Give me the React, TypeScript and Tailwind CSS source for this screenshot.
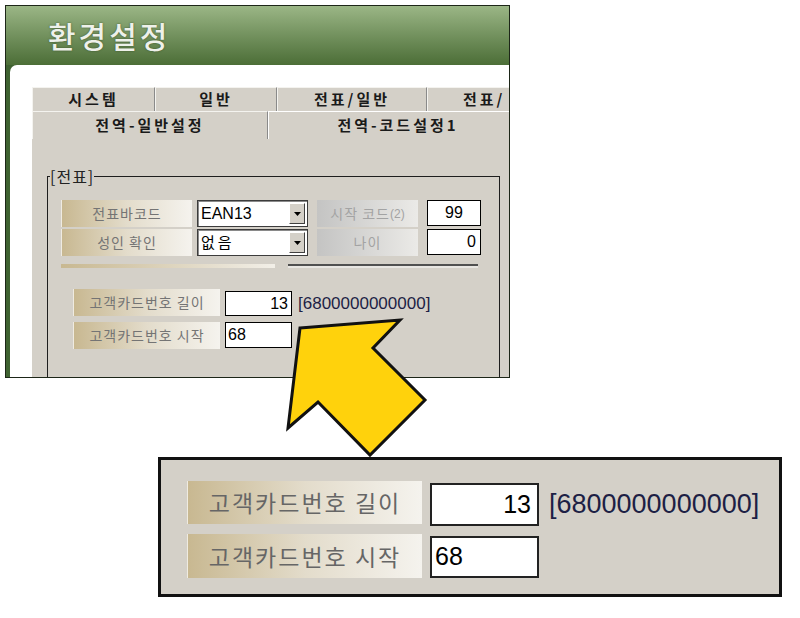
import React from 'react';

const KR = { fontFamily: '"Noto Sans CJK KR", "Noto Sans", sans-serif' };
const NUM = { fontFamily: '"Liberation Sans", Arial, sans-serif' };

const TanLabel = ({ text, className = '' }: { text: string; className?: string }) => (
  <div
    className={`flex items-center justify-center bg-linear-to-r from-[#c8b891] via-[#e3dccb] to-[#f5f3ee] border-l border-[#efebe1] text-[#747474] ${className}`}
    style={KR}
  >
    {text}
  </div>
);

const SilverLabel = ({ children }: { children: React.ReactNode }) => (
  <div
    className="ml-[9px] w-[101px] h-[27px] flex items-center justify-center bg-linear-to-r from-[#c4c4c3] to-[#ebeae7] text-[#a3a3a3] text-[14px] tracking-[1px]"
    style={KR}
  >
    {children}
  </div>
);

const Combo = ({ value, latin }: { value: string; latin?: boolean }) => (
  <div className="ml-[5px] w-[111px] h-[27px] flex bg-white border border-[#3c3c3c] shadow-[inset_1px_1px_0_#8a8a8a]">
    <div
      className={`flex-1 flex items-center pl-[3px] text-black ${latin ? 'text-[16px]' : 'text-[15px] tracking-[3px]'}`}
      style={latin ? NUM : KR}
    >
      {value}
    </div>
    <div className="w-[16px] my-[2px] mr-[2px] flex items-center justify-center bg-[#d4d0c8] border-t border-l border-white border-r border-b border-r-[#404040] border-b-[#404040]">
      <svg width="7" height="4" viewBox="0 0 7 4">
        <polygon points="0,0 7,0 3.5,4" fill="#000" />
      </svg>
    </div>
  </div>
);

const Tab = ({ text, w, extra = '' }: { text: string; w: string; extra?: string }) => (
  <div
    className={`${w} shrink-0 flex items-center bg-[#d4d0c8] border-t border-l border-[#f4f3ef] border-r border-r-[#8a8a8a] text-[15px] font-bold tracking-[3px] text-[#1a1a1a] ${extra || 'justify-center'}`}
    style={KR}
  >
    {text}
  </div>
);

export default function App() {
  return (
    <div className="relative w-[800px] h-[618px] bg-white overflow-hidden">
      {/* top screenshot */}
      <div className="ml-[5px] mt-[5px] w-[505px] h-[373px] border border-[#1d2618] bg-[#3f6231] flex flex-col overflow-hidden">
        <div className="h-[59px] shrink-0 bg-linear-to-b from-[#9bb686] to-[#4c6e37] pl-[42px] flex items-center">
          <span
            className="text-[30px] font-medium tracking-[3px] text-[#eef1ea] [text-shadow:0_0_2px_#3a5229]"
            style={KR}
          >
            환경설정
          </span>
        </div>
        <div className="flex-1 ml-[4px] rounded-tl-[7px] bg-white pt-[22px] pl-[22px] flex flex-col min-h-0">
          <div className="flex h-[24px] shrink-0">
            <Tab text="시스템" w="w-[123px]" />
            <Tab text="일반" w="w-[122px]" />
            <Tab text="전표/일반" w="w-[150px]" />
            <Tab text="전표/" w="w-[82px]" extra="justify-start pl-[35px] border-r-0" />
          </div>
          <div className="flex h-[28px] shrink-0">
            <Tab text="전역-일반설정" w="w-[236px]" />
            <Tab text="전역-코드설정1" w="w-[260px]" extra="justify-center border-t-white border-l-white" />
          </div>
          <div className="flex-1 bg-[#d4d0c8] pl-[15px] pt-[37px]">
            <div className="relative w-[453px] h-[260px] border border-[#1e1e1e] pl-[13px] pt-[23px]">
              <span
                className="absolute left-[2px] top-[-11px] bg-[#d4d0c8] text-[16px] leading-[20px] tracking-[1px] text-[#222]"
                style={KR}
              >
                [전표]
              </span>
              <div className="flex">
                <TanLabel text="전표바코드" className="w-[131px] h-[27px] text-[14px] tracking-[1px]" />
                <Combo value="EAN13" latin />
                <SilverLabel>
                  시작 코드<span className="text-[12px] tracking-normal" style={NUM}>(2)</span>
                </SilverLabel>
                <div className="ml-[9px] w-[54px] h-[26px] bg-white border border-black flex items-center justify-center text-[16px]" style={NUM}>
                  99
                </div>
              </div>
              <div className="flex mt-[2px]">
                <TanLabel text="성인 확인" className="w-[131px] h-[27px] text-[14px] tracking-[1px]" />
                <Combo value="없음" />
                <SilverLabel>나이</SilverLabel>
                <div className="ml-[9px] w-[54px] h-[26px] bg-white border border-black flex items-center justify-end pr-[4px] text-[16px]" style={NUM}>
                  0
                </div>
              </div>
              <div className="flex mt-[8px]">
                <div className="w-[214px] h-[4px] bg-linear-to-r from-[#c8b891] to-[#f2efe8]" />
                <div className="ml-[13px] w-[190px] h-[4px] border-t-2 border-[#505050] bg-[#e8e6e2]" />
              </div>
              <div className="flex mt-[21px] ml-[12px]">
                <TanLabel text="고객카드번호 길이" className="w-[147px] h-[27px] text-[14px] tracking-[1px]" />
                <div className="ml-[5px] mt-[2px] w-[67px] h-[25px] bg-white border border-black flex items-center justify-end pr-[3px] text-[16px]" style={NUM}>
                  13
                </div>
                <div className="ml-[6px] mt-[2px] h-[25px] flex items-center text-[17px] text-[#1d1f45]" style={NUM}>
                  [6800000000000]
                </div>
              </div>
              <div className="flex mt-[6px] ml-[12px]">
                <TanLabel text="고객카드번호 시작" className="w-[147px] h-[27px] text-[14px] tracking-[1px]" />
                <div className="ml-[5px] w-[67px] h-[26px] bg-white border border-black flex items-center pl-[2px] text-[16px]" style={NUM}>
                  68
                </div>
              </div>
            </div>
          </div>
        </div>
      </div>

      {/* magnified box */}
      <div className="ml-[158px] mt-[79px] w-[624px] h-[140px] border-[3px] border-[#111] bg-[#d4d0c8] pl-[26px] pt-[21px]">
        <div className="flex">
          <TanLabel text="고객카드번호 길이" className="w-[235px] h-[43px] text-[23px] tracking-[2px] !text-[#666]" />
          <div className="ml-[8px] mt-[2px] w-[109px] h-[43px] bg-white border-2 border-[#222] flex items-center justify-end pr-[6px] text-[25px]" style={NUM}>
            13
          </div>
          <div className="ml-[10px] mt-[2px] h-[43px] flex items-center text-[27px] text-[#1d1f45]" style={NUM}>
            [6800000000000]
          </div>
        </div>
        <div className="flex mt-[8px]">
          <TanLabel text="고객카드번호 시작" className="w-[235px] h-[44px] text-[23px] tracking-[2px] !text-[#666]" />
          <div className="ml-[8px] mt-[2px] w-[109px] h-[42px] bg-white border-2 border-[#222] flex items-center pl-[3px] text-[25px]" style={NUM}>
            68
          </div>
        </div>
      </div>

      {/* callout arrow */}
      <svg className="absolute left-0 top-0 pointer-events-none" width="800" height="618" viewBox="0 0 800 618">
        <polygon
          points="300,328 400,320 373,348 425,400 370,455 318,402 288,428"
          fill="#ffd20c"
          stroke="#111"
          strokeWidth="3"
          strokeLinejoin="miter"
        />
      </svg>
    </div>
  );
}
